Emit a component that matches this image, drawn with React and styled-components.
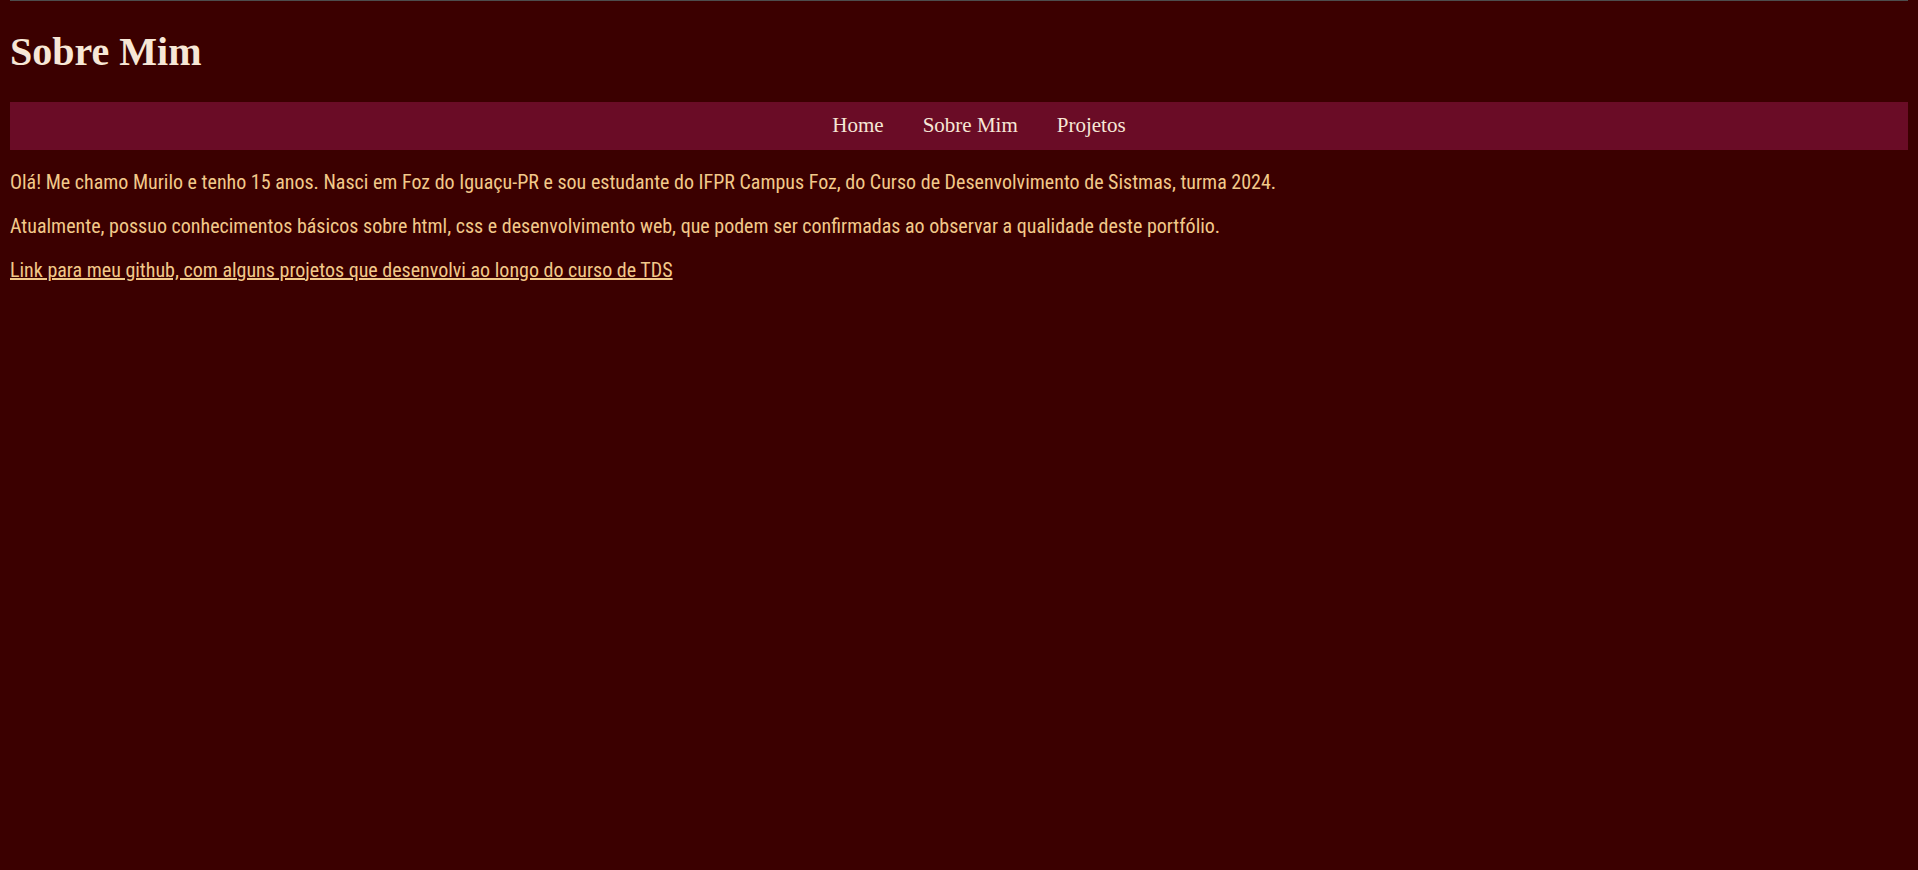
import React from 'react'
import styled, { createGlobalStyle } from 'styled-components'

const GlobalStyle = createGlobalStyle`
html{
  background-color:#3b0000;
}
body{
  margin:10px;
  border-top:1px solid #4d4d4d;
  margin-top:0;
  background-color:#3b0000;
}
`

const Titulo = styled.h1`
font-family:"Liberation Serif", "Times New Roman", serif;
font-size:40px;
font-weight:bold;
color:#f7e7d6;
margin:0.67em 0;
`

const Menu = styled.nav`
background-color:#6a0c26;
height:48px;
display:flex;
align-items:center;
justify-content:center;
padding-left:40px;
`

const MenuLink = styled.a`
font-family:"Liberation Serif", "Times New Roman", serif;
font-size:21px;
color:#f7e7d6;
text-decoration:none;
margin:0 19.5px;
cursor:pointer;
`

const Texto = styled.p`
font-family:Roboto, sans-serif;
font-stretch:condensed;
font-size:20px;
color:#f2c98a;
margin:20px 0;
`

const LinkGit = styled.a`
color:#f2c98a;
text-decoration:underline;
`

const App = () => {
  return (
    <>
      <GlobalStyle />
      <header>
        <Titulo>Sobre Mim</Titulo>
      </header>
      <Menu>
        <MenuLink href="#">Home</MenuLink>
        <MenuLink href="#">Sobre Mim</MenuLink>
        <MenuLink href="#">Projetos</MenuLink>
      </Menu>
      <main>
        <Texto>Olá! Me chamo Murilo e tenho 15 anos. Nasci em Foz do Iguaçu-PR e sou estudante do IFPR Campus Foz, do Curso de Desenvolvimento de Sistmas, turma 2024.</Texto>
        <Texto>Atualmente, possuo conhecimentos básicos sobre html, css e desenvolvimento web, que podem ser confirmadas ao observar a qualidade deste portfólio.</Texto>
        <Texto>
          <LinkGit href="#">Link para meu github, com alguns projetos que desenvolvi ao longo do curso de TDS</LinkGit>
        </Texto>
      </main>
    </>
  )
}

export default App
